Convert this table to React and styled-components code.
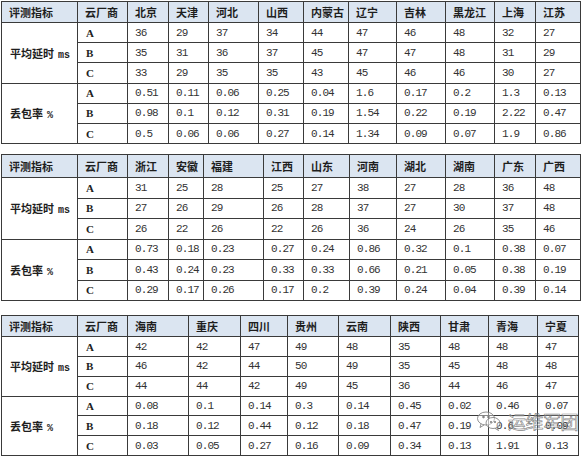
import React from 'react';
import styled, { createGlobalStyle } from 'styled-components';

const GlobalStyle = createGlobalStyle`
  html, body {
    margin: 0;
    padding: 0;
    background: #ffffff;
  }
`;

const Page = styled.div`
  position: relative;
  width: 586px;
  height: 458px;
  padding: 1px 0 0 1px;
  box-sizing: border-box;
  display: flex;
  flex-direction: column;
  overflow: hidden;
`;

const Table = styled.table`
  border-collapse: collapse;
  table-layout: fixed;
  width: ${(p) => p.$width}px;
  margin-top: ${(p) => p.$gap || 0}px;
  color: #2a2a2a;
`;

const HeadRow = styled.tr`
  height: ${(p) => p.$h}px;
  background: #dbe5f1;
`;

const BodyRow = styled.tr`
  height: ${(p) => p.$h}px;
`;

const Th = styled.th`
  border: 1px solid #3a3a3a;
  padding: 0 0 0 7px;
  text-align: left;
  font-family: "Noto Sans CJK SC", sans-serif;
  font-weight: 700;
  font-size: 11px;
  line-height: 1;
  color: #1e1e1e;
  white-space: nowrap;
  overflow: hidden;
`;

const MetricCell = styled.td`
  border: 1px solid #3a3a3a;
  padding: 0 0 0 8px;
  font-family: "Noto Sans CJK SC", sans-serif;
  font-weight: 700;
  font-size: 11px;
  color: #1e1e1e;
  white-space: nowrap;
`;

const Unit = styled.span`
  font-family: "Liberation Mono", monospace;
  font-weight: 700;
  font-size: 10px;
  margin-left: 4px;
`;

const VendorCell = styled.td`
  border: 1px solid #3a3a3a;
  padding: 0 0 0 8px;
  font-family: "Liberation Serif", serif;
  font-weight: 700;
  font-size: 11px;
  color: #1e1e1e;
`;

const ValueCell = styled.td`
  border: 1px solid #3a3a3a;
  padding: 0 0 0 7px;
  font-family: "Liberation Mono", monospace;
  font-size: 11px;
  letter-spacing: -0.9px;
  color: #333333;
  white-space: nowrap;
  overflow: hidden;
`;

const Watermark = styled.div`
  position: absolute;
  left: 476px;
  top: 408px;
  display: flex;
  align-items: center;
  gap: 6px;
  pointer-events: none;
`;

const MarkText = styled.span`
  font-family: "Noto Sans CJK SC", sans-serif;
  font-size: 18px;
  font-weight: 400;
  color: rgba(255, 255, 255, 0.35);
  -webkit-text-stroke: 0.7px rgba(110, 110, 110, 0.85);
  letter-spacing: -0.5px;
`;

const WeChatMark = () => (
  <svg width="26" height="22" viewBox="0 0 26 22" fill="none" stroke="rgba(120,120,120,0.8)" strokeWidth="1">
    <ellipse cx="10" cy="8.5" rx="8.5" ry="6.5" fill="rgba(255,255,255,0.4)" />
    <path d="M5 14 L4 17.5 L8 15" />
    <ellipse cx="17" cy="13" rx="7" ry="5.5" fill="rgba(255,255,255,0.4)" />
    <path d="M21 18 L22.5 20.5 L19 18.3" />
    <circle cx="7.5" cy="7" r="0.9" fill="rgba(120,120,120,0.8)" />
    <circle cx="12.5" cy="7" r="0.9" fill="rgba(120,120,120,0.8)" />
    <circle cx="15" cy="12" r="0.7" fill="rgba(120,120,120,0.8)" />
    <circle cx="19" cy="12" r="0.7" fill="rgba(120,120,120,0.8)" />
  </svg>
);

const tables = [
  {
    widths: [76, 50, 41, 40, 50, 45, 45, 48, 49, 49, 41, 45],
    head: 21,
    row: 20.2,
    gap: 0,
    regions: ['北京', '天津', '河北', '山西', '内蒙古', '辽宁', '吉林', '黑龙江', '上海', '江苏'],
    latency: [
      ['36', '29', '37', '34', '44', '47', '46', '48', '32', '27'],
      ['35', '31', '36', '37', '45', '47', '47', '48', '31', '29'],
      ['33', '29', '35', '35', '43', '45', '46', '46', '30', '27'],
    ],
    loss: [
      ['0.51', '0.11', '0.06', '0.25', '0.04', '1.6', '0.17', '0.2', '1.3', '0.13'],
      ['0.98', '0.1', '0.12', '0.31', '0.19', '1.54', '0.22', '0.19', '2.22', '0.47'],
      ['0.5', '0.06', '0.06', '0.27', '0.14', '1.34', '0.09', '0.07', '1.9', '0.86'],
    ],
  },
  {
    widths: [76, 50, 41, 35, 60, 40, 46, 47, 49, 49, 41, 45],
    head: 23,
    row: 20.5,
    gap: 10,
    regions: ['浙江', '安徽', '福建', '江西', '山东', '河南', '湖北', '湖南', '广东', '广西'],
    latency: [
      ['31', '25', '28', '25', '27', '38', '27', '28', '36', '48'],
      ['27', '26', '29', '26', '28', '37', '27', '30', '37', '48'],
      ['26', '22', '26', '22', '26', '36', '24', '26', '35', '46'],
    ],
    loss: [
      ['0.73', '0.18', '0.23', '0.27', '0.24', '0.86', '0.32', '0.1', '0.38', '0.07'],
      ['0.43', '0.24', '0.23', '0.33', '0.33', '0.66', '0.21', '0.05', '0.38', '0.19'],
      ['0.29', '0.17', '0.26', '0.17', '0.2', '0.39', '0.24', '0.04', '0.39', '0.14'],
    ],
  },
  {
    widths: [76, 50, 61, 52, 47, 51, 52, 50, 48, 49, 41],
    head: 21,
    row: 19.8,
    gap: 14,
    regions: ['海南', '重庆', '四川', '贵州', '云南', '陕西', '甘肃', '青海', '宁夏'],
    latency: [
      ['42', '42', '47', '49', '48', '35', '48', '48', '47'],
      ['46', '42', '44', '50', '49', '35', '45', '48', '48'],
      ['44', '44', '42', '49', '45', '36', '44', '46', '47'],
    ],
    loss: [
      ['0.08', '0.1', '0.14', '0.3', '0.14', '0.45', '0.02', '0.46', '0.07'],
      ['0.18', '0.12', '0.44', '0.12', '0.18', '0.47', '0.19', '0.6', '0.09'],
      ['0.03', '0.05', '0.27', '0.16', '0.09', '0.34', '0.13', '1.91', '0.13'],
    ],
  },
];

const vendors = ['A', 'B', 'C'];

const MetricRows = ({ label, unit, data, h }) =>
  data.map((values, i) => (
    <BodyRow key={i} $h={h}>
      {i === 0 && (
        <MetricCell rowSpan={3}>
          {label}
          <Unit>{unit}</Unit>
        </MetricCell>
      )}
      <VendorCell>{vendors[i]}</VendorCell>
      {values.map((v, j) => (
        <ValueCell key={j}>{v}</ValueCell>
      ))}
    </BodyRow>
  ));

const ResultTable = ({ t }) => (
  <Table $width={t.widths.reduce((a, b) => a + b, 0)} $gap={t.gap}>
    <colgroup>
      {t.widths.map((w, i) => (
        <col key={i} style={{ width: w }} />
      ))}
    </colgroup>
    <thead>
      <HeadRow $h={t.head}>
        <Th>评测指标</Th>
        <Th>云厂商</Th>
        {t.regions.map((r) => (
          <Th key={r}>{r}</Th>
        ))}
      </HeadRow>
    </thead>
    <tbody>
      <MetricRows label="平均延时" unit="ms" data={t.latency} h={t.row} />
      <MetricRows label="丢包率" unit="%" data={t.loss} h={t.row} />
    </tbody>
  </Table>
);

const App = () => (
  <>
    <GlobalStyle />
    <Page>
      {tables.map((t, i) => (
        <ResultTable key={i} t={t} />
      ))}
      <Watermark>
        <WeChatMark />
        <MarkText>运维军团</MarkText>
      </Watermark>
    </Page>
  </>
);

export default App;
